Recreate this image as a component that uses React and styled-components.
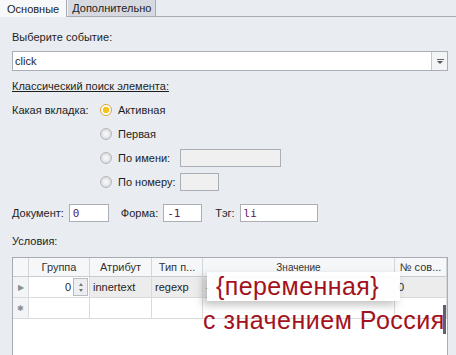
import React from 'react';
import styled, { createGlobalStyle } from 'styled-components';

const GlobalStyle = createGlobalStyle`
  html, body {
    margin: 0;
    padding: 0;
    background: #e9ecf0;
    overflow: hidden;
  }
  body {
    font-family: 'Liberation Sans', Arial, sans-serif;
    font-size: 11px;
    color: #1e1e1e;
  }
`;

const Window = styled.div`
  width: 456px;
  height: 355px;
  overflow: hidden;
  position: relative;
`;

const TabBar = styled.div`
  display: flex;
  height: 16px;
  border-bottom: 1px solid #a9adb5;
`;

const Tab = styled.div`
  display: flex;
  align-items: center;
  height: ${({ $active }) => ($active ? '17px' : '16px')};
  box-sizing: border-box;
  padding: 0 ${({ $active }) => ($active ? '7px' : '4px')};
  background: ${({ $active }) => ($active ? '#f7f8fa' : '#d6dae0')};
  border-right: 1px solid #a9adb5;
  border-left: ${({ $active }) => ($active ? 'none' : '1px solid #f0f2f5')};
  color: #222;
  font-size: 11px;
`;

const Panel = styled.div`
  padding: 0 8px 0 12px;
  display: flex;
  flex-direction: column;
`;

const Label = styled.div`
  height: 14px;
  line-height: 14px;
  margin-top: ${({ $mt }) => $mt || 0}px;
  text-decoration: ${({ $underline }) => ($underline ? 'underline' : 'none')};
  white-space: nowrap;
`;

const Combo = styled.div`
  margin-top: 7px;
  height: 20px;
  box-sizing: border-box;
  border: 1px solid #abaeb4;
  background: #fff;
  display: flex;
  align-items: center;
  width: 436px;
`;

const ComboValue = styled.div`
  flex: 1;
  padding-left: 2px;
`;

const ComboButton = styled.div`
  width: 15px;
  height: 18px;
  border-left: 1px solid #c3c6cb;
  background: #f3f4f6;
  display: flex;
  align-items: center;
  justify-content: center;
`;

const Arrow = styled.div`
  width: 0;
  height: 0;
  border-left: 3px solid transparent;
  border-right: 3px solid transparent;
  border-top: 3px solid #555;
  position: relative;
  top: 1px;
  &::before {
    content: '';
    position: absolute;
    left: -3px;
    top: -5px;
    width: 7px;
    height: 1px;
    background: #666;
  }
`;

const RadioGrid = styled.div`
  margin-top: 5px;
  display: grid;
  grid-template-columns: 88px auto;
  grid-auto-rows: 24px;
`;

const RadioRow = styled.div`
  grid-column: 2;
  display: flex;
  align-items: center;
  gap: 6px;
`;

const RadioLabelCell = styled.div`
  grid-column: 1;
  display: flex;
  align-items: center;
`;

const RadioDot = styled.span`
  width: 12px;
  height: 12px;
  flex-shrink: 0;
  box-sizing: border-box;
  border-radius: 50%;
  border: 1px solid ${({ $on }) => ($on ? '#e0a530' : '#b5b8bd')};
  background: ${({ $on }) =>
    $on
      ? 'radial-gradient(circle, #f7c21a 0 3px, #fff 3.5px)'
      : 'radial-gradient(circle, #f4f4f4 0 2px, #d9dadd 5px)'};
  display: inline-block;
`;

const RadioText = styled.span`
  width: 56px;
  flex-shrink: 0;
  white-space: nowrap;
`;

const Box = styled.div`
  height: 18px;
  flex-shrink: 0;
  box-sizing: border-box;
  width: ${({ $w }) => $w}px;
  border: 1px solid #abaeb4;
  background: ${({ $disabled }) => ($disabled ? '#f0f0f0' : '#fff')};
  display: flex;
  align-items: center;
  padding-left: 3px;
  font-family: 'DejaVu Sans Mono', 'Liberation Mono', monospace;
  font-size: 11px;
  color: #5a1a5e;
`;

const FieldsRow = styled.div`
  margin-top: 10px;
  display: flex;
  align-items: center;
`;

const FieldLabel = styled.span`
  margin-right: 5px;
  margin-left: ${({ $ml }) => $ml || 0}px;
`;

const TableWrap = styled.div`
  margin-top: 9px;
  width: 436px;
  height: 100px;
  box-sizing: border-box;
  border: 1px solid #a8abb1;
  border-bottom: none;
  background: #fff;
  position: relative;
`;

const Grid = styled.div`
  display: grid;
  grid-template-columns: 16px 61px 62px 51px 192px 52px;
`;

const HeadCell = styled.div`
  height: 19px;
  box-sizing: border-box;
  border-right: 1px solid #d2d5da;
  border-bottom: 1px solid #c9ccd1;
  background: #f6f7f9;
  display: flex;
  align-items: center;
  justify-content: center;
  color: #333;
  white-space: nowrap;
  overflow: hidden;
  font-size: ${({ $small }) => ($small ? '10px' : '11px')};
`;

const Cell = styled.div`
  height: 21px;
  box-sizing: border-box;
  border-right: 1px solid #d8dadd;
  border-bottom: 1px solid #d8dadd;
  background: ${({ $bg }) => $bg || '#fff'};
  display: flex;
  align-items: center;
  padding: 0 3px;
  white-space: nowrap;
  overflow: hidden;
`;

const Indicator = styled(Cell)`
  padding: 0;
  justify-content: center;
  background: #f3f4f6;
  color: #8a8d92;
  font-size: 8px;
`;

const Spin = styled.div`
  display: flex;
  align-items: center;
  justify-content: flex-end;
  height: 21px;
  box-sizing: border-box;
  background: #fff;
  border-right: 1px solid #d8dadd;
  border-bottom: 1px solid #d8dadd;
  padding-right: 1px;
  gap: 2px;
`;

const SpinButtons = styled.div`
  width: 15px;
  height: 18px;
  box-sizing: border-box;
  border: 1px solid #b9bcc2;
  background: #eceef1;
  display: flex;
  flex-direction: column;
  align-items: center;
  justify-content: center;
  gap: 3px;
`;

const Tri = styled.div`
  width: 0;
  height: 0;
  border-left: 2px solid transparent;
  border-right: 2px solid transparent;
  ${({ $up }) => ($up ? 'border-bottom: 3px solid #777;' : 'border-top: 3px solid #777;')}
`;

const Note = styled.div`
  position: absolute;
  font-family: 'Liberation Sans', Arial, sans-serif;
  font-size: 25px;
  color: #a3121c;
  white-space: nowrap;
`;

const NoteTop = styled(Note)`
  left: 194px;
  top: 14px;
  width: 184px;
  height: 29px;
  line-height: 28px;
  padding-left: 9px;
  letter-spacing: 0.4px;
  background: rgba(255, 255, 255, 0.92);
  box-shadow: -4px 4px 8px rgba(120, 120, 120, 0.45);
`;

const NoteBottom = styled(Note)`
  left: 190px;
  top: 47px;
  line-height: 30px;
  letter-spacing: 0.5px;
`;

const Thumb = styled.div`
  position: absolute;
  right: 1px;
  top: 47px;
  width: 3px;
  height: 29px;
  background: #5f6266;
`;

export default function App() {
  return (
    <Window>
      <GlobalStyle />
      <TabBar>
        <Tab $active>Основные</Tab>
        <Tab>Дополнительно</Tab>
      </TabBar>
      <Panel>
        <Label $mt={13}>Выберите событие:</Label>
        <Combo>
          <ComboValue>click</ComboValue>
          <ComboButton>
            <Arrow />
          </ComboButton>
        </Combo>
        <Label $mt={8} $underline>
          Классический поиск элемента:
        </Label>
        <RadioGrid>
          <RadioLabelCell>Какая вкладка:</RadioLabelCell>
          <RadioRow>
            <RadioDot $on />
            <RadioText>Активная</RadioText>
          </RadioRow>
          <RadioRow>
            <RadioDot />
            <RadioText>Первая</RadioText>
          </RadioRow>
          <RadioRow>
            <RadioDot />
            <RadioText>По имени:</RadioText>
            <Box $w={101} $disabled />
          </RadioRow>
          <RadioRow>
            <RadioDot />
            <RadioText>По номеру:</RadioText>
            <Box $w={39} $disabled />
          </RadioRow>
        </RadioGrid>
        <FieldsRow>
          <FieldLabel>Документ:</FieldLabel>
          <Box $w={40}>0</Box>
          <FieldLabel $ml={12}>Форма:</FieldLabel>
          <Box $w={39}>-1</Box>
          <FieldLabel $ml={13}>Тэг:</FieldLabel>
          <Box $w={78}>li</Box>
        </FieldsRow>
        <Label $mt={12}>Условия:</Label>
        <TableWrap>
          <Grid>
            <HeadCell />
            <HeadCell>Группа</HeadCell>
            <HeadCell>Атрибут</HeadCell>
            <HeadCell>Тип п...</HeadCell>
            <HeadCell $small>Значение</HeadCell>
            <HeadCell>№ сов...</HeadCell>

            <Indicator>▶</Indicator>
            <Spin>
              <span>0</span>
              <SpinButtons>
                <Tri $up />
                <Tri />
              </SpinButtons>
            </Spin>
            <Cell $bg="#ececec">innertext</Cell>
            <Cell $bg="#ececec">regexp</Cell>
            <Cell $bg="#ececec">-</Cell>
            <Cell $bg="#ececec">0</Cell>

            <Indicator>✱</Indicator>
            <Cell />
            <Cell />
            <Cell />
            <Cell />
            <Cell />
          </Grid>
          <NoteTop>{'{переменная}'}</NoteTop>
          <NoteBottom>с значением Россия</NoteBottom>
          <Thumb />
        </TableWrap>
      </Panel>
    </Window>
  );
}
